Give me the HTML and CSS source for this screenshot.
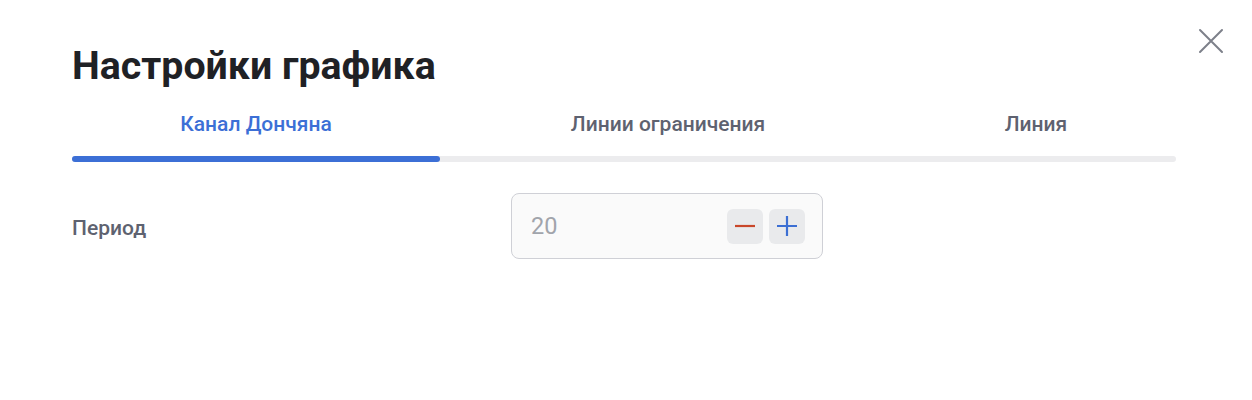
FILE: index.html
```html
<!DOCTYPE html>
<html lang="ru">
<head>
<meta charset="utf-8">
<link rel="stylesheet" href="styles.css">
</head>
<body>
<div class="modal">
  <button class="close" aria-label="Закрыть">
    <svg width="26" height="26" viewBox="0 0 26 26"><path d="M2 2 L24 24 M24 2 L2 24" stroke="#7d808a" stroke-width="2" stroke-linecap="round" fill="none"/></svg>
  </button>
  <h1 class="title">Настройки графика</h1>
  <div class="tabs">
    <div class="tab active">Канал Дончяна</div>
    <div class="tab">Линии ограничения</div>
    <div class="tab">Линия</div>
  </div>
  <div class="track"><div class="indicator"></div></div>
  <div class="row">
    <div class="label">Период</div>
    <div class="field">
      <span class="value">20</span>
      <div class="btns">
        <button class="step minus"><svg width="20" height="20" viewBox="0 0 20 20"><path d="M0 10 H20" stroke="#c9472a" stroke-width="2.2"/></svg></button>
        <button class="step plus"><svg width="20" height="20" viewBox="0 0 20 20"><path d="M0 10 H20 M10 0 V20" stroke="#3c6fd3" stroke-width="2.2"/></svg></button>
      </div>
    </div>
  </div>
</div>
</body>
</html>
```
FILE: styles.css
```css
* { box-sizing: border-box; }
html, body { margin: 0; padding: 0; background: #fff; }
body { font-family: Roboto, "Noto Sans", sans-serif; }
.modal { position: relative; width: 1252px; height: 400px; padding: 42px 76px 0 72px; }
.close { position: absolute; top: 27px; right: 27px; width: 28px; height: 28px; padding: 1px; border: 0; background: none; cursor: pointer; }
.close svg { display: block; }
.title { margin: 0; font-size: 39.3px; font-weight: 700; color: #1f2125; line-height: 48px; }
.tabs { display: grid; grid-template-columns: 368fr 456fr 280fr; margin-top: 20px; }
.tab { text-align: center; font-size: 21px; font-weight: 500; color: #5e6270; line-height: 28px; }
.tab.active { color: #3c6fd6; }
.track { margin-top: 18px; height: 6px; border-radius: 3px; background: #ececee; }
.indicator { width: 368px; height: 6px; border-radius: 3px; background: #3c6fd6; }
.row { display: grid; grid-template-columns: 439px 312px; align-items: center; margin-top: 31px; }
.label { font-size: 21px; font-weight: 500; color: #5e6270; padding-top: 4px; }
.field { height: 66px; border: 1px solid #cfd0d6; border-radius: 8px; background: #fafafa; display: flex; align-items: center; justify-content: space-between; padding: 0 17px 0 19px; }
.value { font-size: 23.5px; color: #a1a4ab; }
.btns { display: flex; gap: 6px; }
.step { width: 36px; height: 35px; border: 0; border-radius: 6px; background: #e9eaec; display: flex; align-items: center; justify-content: center; padding: 0; }
.step svg { display: block; }
```
